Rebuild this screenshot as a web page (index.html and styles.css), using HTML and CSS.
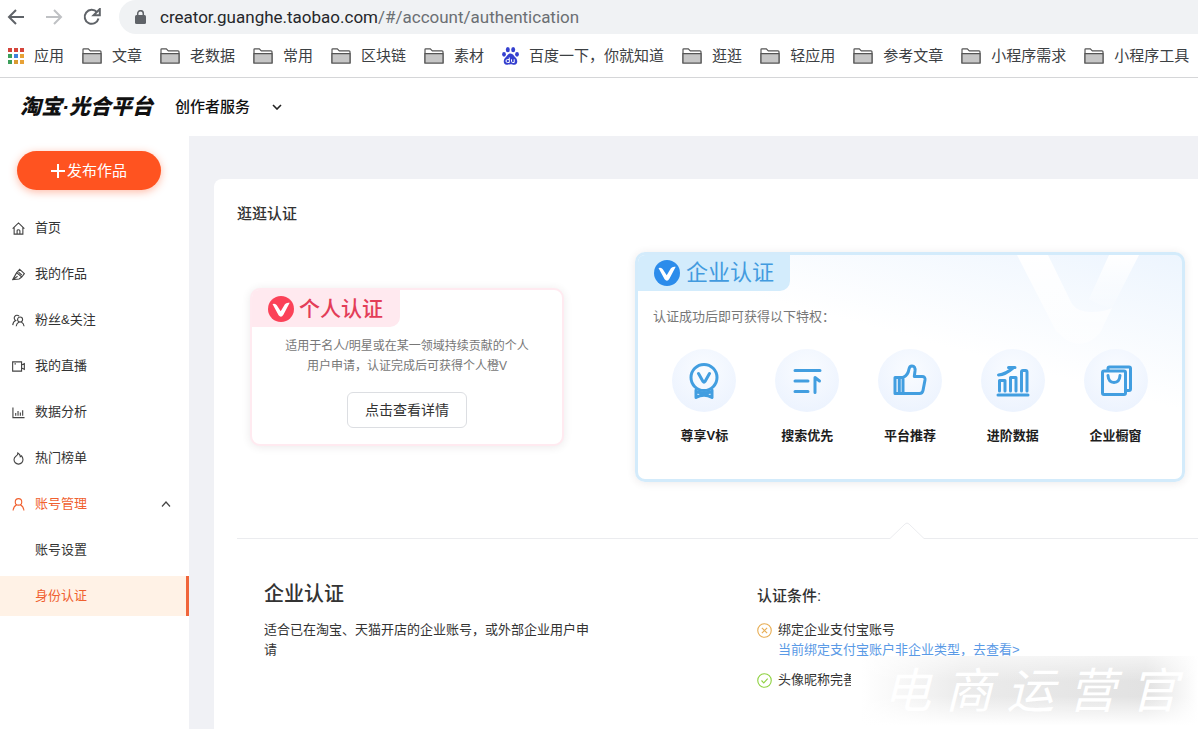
FILE: index.html
```html
<!DOCTYPE html>
<html lang="zh-CN">
<head>
<meta charset="utf-8">
<meta name="viewport" content="width=device-width, initial-scale=1">
<title>淘宝·光合平台</title>
<link rel="stylesheet" href="styles.css">
</head>
<body>
<svg class="defs" aria-hidden="true">
  <symbol id="folder" viewBox="0 0 20 16"><path d="M1 15V1.500q0-.7.7-.7h4.600l2 2H18q1 0 1 1V15Z" fill="#fff" stroke="#555" stroke-width="1.200"/><path d="M1 5.600h18V15H1Z" fill="#c6c6c6" stroke="#555" stroke-width="1.200"/></symbol>
  <symbol id="vmark" viewBox="0 0 26 26"><circle cx="13" cy="13" r="13" fill="currentColor"/><path d="M4.500 8q3-1 4.300 1.200l3.900 6 4.200-6.900q1.500-2.200 4.800-1.500l-6.300 11.900q-2.200 3.700-4.800.6Z" fill="#fff"/></symbol>
</svg>

<div class="browser">
  <div class="toolbar">
    <button class="nav" aria-label="后退"><svg width="18" height="16" viewBox="0 0 18 16"><path d="M17 8H2M9 1 2 8l7 7" /></svg></button>
    <button class="nav nav-off" aria-label="前进" disabled><svg width="18" height="16" viewBox="0 0 18 16"><path d="M1 8h15M9 1l7 7-7 7"/></svg></button>
    <button class="nav" aria-label="刷新"><svg width="18" height="18" viewBox="0 0 18 18"><path d="M15.500 10.500A7 7 0 1 1 14 4.200"/><path d="M16.800 1v6.200h-6.200Z" fill="#5f6368" stroke="none"/></svg></button>
    <div class="address">
      <svg width="11" height="14" viewBox="0 0 11 14"><path d="M1.500 5H9.500Q11 5 11 6.500V12.500Q11 14 9.500 14H1.500Q0 14 0 12.500V6.500Q0 5 1.500 5Z" fill="#5f6368"/><path d="M2.700 6V3.500a2.800 2.800 0 0 1 5.600 0V6" fill="none" stroke="#5f6368" stroke-width="1.500"/></svg>
      <span class="url">creator.guanghe.taobao.com<span class="path">/#/account/authentication</span></span>
    </div>
  </div>
  <nav class="bookmarks" aria-label="书签">
    <a href="#"><svg width="16" height="16" viewBox="0 0 16 16"><g fill="#d5453b"><path d="M0 0h4v4H0zM6 0h4v4H6zM12 0h4v4h-4z"/></g><path d="M0 6h4v4H0zM0 12h4v4H0z" fill="#3c9f5b"/><path d="M6 6h4v4H6z" fill="#3f82dc"/><path d="M6 12h4v4H6z" fill="#d99a32"/><path d="M12 6h4v4h-4zM12 12h4v4h-4z" fill="#e7a136"/></svg><span>应用</span></a>
    <a href="#"><svg class="folder"><use href="#folder"/></svg><span>文章</span></a>
    <a href="#"><svg class="folder"><use href="#folder"/></svg><span>老数据</span></a>
    <a href="#"><svg class="folder"><use href="#folder"/></svg><span>常用</span></a>
    <a href="#"><svg class="folder"><use href="#folder"/></svg><span>区块链</span></a>
    <a href="#"><svg class="folder"><use href="#folder"/></svg><span>素材</span></a>
    <a href="#"><svg width="17" height="18" viewBox="0 0 17 18" fill="#3540cf"><ellipse cx="5.800" cy="2.700" rx="2" ry="2.600"/><ellipse cx="11.200" cy="2.700" rx="2" ry="2.600"/><ellipse cx="2" cy="7.300" rx="1.900" ry="2.400"/><ellipse cx="15" cy="7.300" rx="1.900" ry="2.400"/><path d="M8.500 6.500c2.500 0 3.200 2.300 5 4 2.500 2.300 2.500 7.200-1.200 7.200-1.500 0-2.300-.5-3.800-.5s-2.300.5-3.800.5c-3.700 0-3.700-4.900-1.200-7.200 1.800-1.700 2.500-4 5-4Z"/><path d="M7.300 10.500v5H5.500a1.500 1.500 0 0 1 0-3h1.800M9.500 12.300v2q0 1.200 1.200 1.200h1.500v-3.200" fill="none" stroke="#fff" stroke-width="1"/></svg><span>百度一下，你就知道</span></a>
    <a href="#"><svg class="folder"><use href="#folder"/></svg><span>逛逛</span></a>
    <a href="#"><svg class="folder"><use href="#folder"/></svg><span>轻应用</span></a>
    <a href="#"><svg class="folder"><use href="#folder"/></svg><span>参考文章</span></a>
    <a href="#"><svg class="folder"><use href="#folder"/></svg><span>小程序需求</span></a>
    <a href="#"><svg class="folder"><use href="#folder"/></svg><span>小程序工具</span></a>
  </nav>
</div>

<header class="header">
  <a class="logo" href="#">淘宝·光合平台</a>
  <button class="switch">创作者服务<svg width="10" height="6" viewBox="0 0 10 6"><path d="m1 1 4 4 4-4" fill="none" stroke="#222" stroke-width="1.600"/></svg></button>
</header>

<div class="layout">
  <aside class="sidebar">
    <button class="publish"><svg width="14" height="14" viewBox="0 0 14 14"><path d="M7 0v14M0 7h14" stroke="#fff" stroke-width="2"/></svg>发布作品</button>
    <nav class="menu">
      <a href="#"><svg viewBox="0 0 14 14"><path d="M.7 7.200 7 1l6.300 6.200M2.300 6v7h9.400V6M5.500 13V9.500q0-1.200 1.500-1.200t1.500 1.200V13"/></svg><span>首页</span></a>
      <a href="#"><svg viewBox="0 0 14 14"><path d="M8.300 1.500 13.300 6l-2.800 3.700L5 5ZM5 5 .8 12.500l6.900-.7 2.800-2.100M.8 12.500 6 8.800M7 4.500l3.500 3"/></svg><span>我的作品</span></a>
      <a href="#"><svg viewBox="0 0 14 14"><path d="M.8 12q.2-3.600 3.200-5A3 3 0 1 1 7.600 2.300"/><circle cx="8.700" cy="6" r="2.700"/><path d="M4.500 13.200Q4.800 10 7.500 8.500M10 8.500q2.700 1.500 3 4.700"/></svg><span>粉丝&amp;关注</span></a>
      <a href="#"><svg viewBox="0 0 14 14"><path d="M.7 2h9.600v10H.7ZM10.300 5.300 13.300 4v6l-3-1.300M2.700 4.200h1.500"/></svg><span>我的直播</span></a>
      <a href="#"><svg viewBox="0 0 14 14"><path d="M1 1.500v11h12.500M4 10.500V7.500M6.500 10.500V5.500M9 10.500V7M11.500 10.500V4.500"/></svg><span>数据分析</span></a>
      <a href="#"><svg viewBox="0 0 14 14"><path d="M6.300 1q2.600 1.400 2.700 4l1.300-.9q1.500 1.900 1.500 4A4.700 4.700 0 0 1 7 13a4.700 4.700 0 0 1-4.800-4.900q0-2.200 2-3.600Q6.300 3.400 6.300 1Z"/></svg><span>热门榜单</span></a>
      <a href="#" class="open"><svg viewBox="0 0 14 14"><circle cx="7" cy="4.200" r="3.500"/><path d="M1.200 13.500q.3-4.500 3.800-6.300M9 7.200q3.500 1.800 3.800 6.300"/></svg><span>账号管理</span><svg class="caret" viewBox="0 0 10 6"><path d="m1 5.500 4-4.500 4 4.500"/></svg></a>
      <a href="#" class="sub">账号设置</a>
      <a href="#" class="sub current">身份认证</a>
    </nav>
  </aside>

  <main class="main">
    <section class="panel">
      <h1 class="panel-title">逛逛认证</h1>
      <div class="cards">
        <article class="card personal">
          <h2 class="tag"><svg><use href="#vmark"/></svg>个人认证</h2>
          <p class="intro">适用于名人/明星或在某一领域持续贡献的个人<br>用户申请，认证完成后可获得个人橙V</p>
          <button class="detail">点击查看详情</button>
        </article>
        <article class="card company">
          <svg class="backdrop" viewBox="0 0 200 100" aria-hidden="true">
            <defs>
              <linearGradient id="arm" x1="0" y1="0" x2="0" y2="1"><stop offset="0" stop-color="#fff"/><stop offset="1" stop-color="#fff" stop-opacity=".5"/></linearGradient>
              <linearGradient id="fade" x1="0" y1="0" x2="0" y2="1"><stop offset="0" stop-color="#fff"/><stop offset="1" stop-color="#fff" stop-opacity=".1"/></linearGradient>
            </defs>
            <path d="M35 0H66L90 49Q96 57 109 57 122 57 130 53L118 78Q102 96 83 84L74 76Z" fill="url(#arm)"/>
            <path d="M127 0H157L130 53Q120 52 107 44Z" fill="url(#fade)"/>
          </svg>
          <h2 class="tag"><svg><use href="#vmark"/></svg>企业认证</h2>
          <p class="intro">认证成功后即可获得以下特权：</p>
          <ul class="perks">
            <li><span class="disc"><svg viewBox="0 0 36 36"><circle cx="18" cy="14.500" r="13"/><path d="m12.500 10.500 4.500 8q1 1.500 2 0l4.500-8M10 27v7.500q8-4.500 16 0V27M10 28.500q8 3 16 0"/></svg></span>尊享V标</li>
            <li><span class="disc"><svg viewBox="0 0 36 36"><path d="M6 7.500h25M6 18h13M6 28.500h13M26 29.500V14.500l4.500 3.500"/></svg></span>搜索优先</li>
            <li><span class="disc"><svg viewBox="0 0 36 36"><path d="M3 14.500h8v16H3Zm8 0q5-2 6-8.500.5-3 3-3 3.500 0 3 5l-.7 5.500H30q3.500 0 3 3.500l-2 10.500q-.6 3-3.500 3H11M7.300 15v15"/></svg></span>平台推荐</li>
            <li><span class="disc"><svg viewBox="0 0 36 36"><path d="M3 32h30M4.500 28V17.500h5.500V28M15.500 28V14.500H21V28M26.500 28V9q0-1.500 1.500-1.500h2.500Q32 7.500 32 9v19M3.500 12q7-.5 14.500-7M13.500 4.500H20"/></svg></span>进阶数据</li>
            <li><span class="disc"><svg viewBox="0 0 36 36"><path d="M6 8h20q1.500 0 1.500 1.500v20.500q0 1.500-1.500 1.500H6q-1.500 0-1.500-1.500V9.500Q4.500 8 6 8ZM10 8V5.500Q10 4 11.500 4H31q1.500 0 1.500 1.500V26q0 1.500-1.500 1.500h-3M10 12.500q.5 7 6 7t6-7"/></svg></span>企业橱窗</li>
          </ul>
        </article>
      </div>

      <div class="divider" aria-hidden="true"><i></i><svg width="40" height="17" viewBox="0 0 40 17"><path d="M0 16.500h3L18 2q2-2 4 0l15 14.500h3" fill="none" stroke="#ebecef"/></svg><i></i></div>

      <div class="details">
        <div class="about">
          <h2>企业认证</h2>
          <p>适合已在淘宝、天猫开店的企业账号，或外部企业用户申请</p>
        </div>
        <div class="terms">
          <h3>认证条件:</h3>
          <ul>
            <li><svg class="bad" viewBox="0 0 16 16"><circle cx="8" cy="8" r="7.200"/><path d="m5.200 5.200 5.600 5.600m0-5.600-5.600 5.600"/></svg><div>绑定企业支付宝账号<br><a href="#">当前绑定支付宝账户非企业类型，去查看&gt;</a></div></li>
            <li><svg class="good" viewBox="0 0 16 16"><circle cx="8" cy="8" r="7.200"/><path d="m4.800 8 2.400 2.500 4.200-4.600"/></svg><div>头像昵称完善</div></li>
          </ul>
        </div>
      </div>
    </section>
    <div class="watermark"><span>电</span><span>商</span><span>运</span><span>营</span><span>官</span></div>
  </main>
</div>
</body>
</html>
```

FILE: styles.css
```css
* { box-sizing: border-box; }

body {
  display: flex;
  flex-direction: column;
  height: 100vh;
  margin: 0;
  overflow: hidden;
  background: #fff;
  color: #333;
  font: 13px/20px "Liberation Sans", "Noto Sans CJK SC", sans-serif;
}

h1, h2, h3, p, ul { margin: 0; padding: 0; font-weight: 400; }
ul { list-style: none; }
a { color: inherit; text-decoration: none; }
button { padding: 0; border: 0; background: none; color: inherit; font: inherit; cursor: pointer; }
svg { flex: none; }
.defs { position: absolute; width: 0; height: 0; }

/* Browser bars */
.browser { flex: none; border-bottom: 1px solid #d5d6d8; }
.toolbar { display: flex; align-items: center; height: 34px; padding-left: 7px; }
.nav { display: flex; align-items: center; width: 18px; height: 18px; margin-right: 20px; }
.nav path { fill: none; stroke: #5f6368; stroke-width: 2; }
.nav-off path { stroke: #bfc1c4; }
.address {
  display: flex;
  flex: 1;
  align-items: center;
  gap: 14px;
  height: 34px;
  margin-left: -2px;
  padding-left: 16px;
  border-radius: 17px 0 0 17px;
  background: #f0f2f4;
}
.url { color: #25272a; font: 17px/24px Roboto, sans-serif; white-space: nowrap; }
.path { color: #6b6f73; }
.bookmarks {
  display: flex;
  align-items: center;
  gap: 18px;
  height: 43px;
  padding-left: 8px;
  color: #3c4043;
  font-size: 15px;
  white-space: nowrap;
}
.bookmarks a { display: flex; flex: none; align-items: center; gap: 10px; }
.folder { width: 20px; height: 16px; }

/* Site header */
.header { display: flex; flex: none; align-items: center; height: 58px; padding-left: 20px; color: #111; }
.logo { font-size: 21px; font-style: italic; font-weight: 900; line-height: 30px; }
.switch { display: flex; align-items: center; gap: 22px; margin-left: 22px; font-size: 15px; font-weight: 500; }

.layout { display: flex; flex: 1; min-height: 0; }

/* Sidebar */
.sidebar { flex: none; width: 189px; padding-top: 15px; }
.publish {
  display: flex;
  align-items: center;
  justify-content: center;
  gap: 2px;
  width: 144px;
  height: 39px;
  margin-left: 17px;
  border-radius: 20px;
  background: #ff5320;
  box-shadow: 0 2px 8px rgba(255, 83, 32, .4);
  color: #fff;
  font-size: 15px;
}
.menu { display: flex; flex-direction: column; gap: 6px; margin-top: 18px; }
.menu a { display: flex; align-items: center; gap: 10px; height: 40px; padding: 0 18px 0 12px; }
.menu svg { width: 13px; height: 13px; fill: none; stroke: #444; stroke-width: 1.2; }
.menu .open { color: #f0602f; }
.menu .open svg { stroke: #f0602f; }
.menu .open .caret { width: 10px; height: 6px; margin-left: auto; stroke: #444; }
.menu .sub { padding-left: 35px; }
.menu .current { border-right: 3px solid #f0653a; background: #fff2e6; color: #f0602f; }

/* Content */
.main { position: relative; flex: 1; min-width: 0; padding: 43px 0 0 25px; background: #f0f1f5; }
.panel { height: 100%; padding: 24px 0 0 23px; border-radius: 8px 0 0 0; background: #fff; }
.panel-title { font-size: 15px; font-weight: 500; line-height: 22px; }

.cards { display: flex; align-items: center; gap: 71px; margin-top: 27px; padding: 0 13px; }
.card { position: relative; border-radius: 10px; background: #fff; box-shadow: 0 1px 8px rgba(60, 40, 50, .1); }
.tag { display: flex; align-items: center; width: fit-content; border-radius: 7px 0 10px 0; }
.tag svg { width: 26px; height: 26px; }

.personal { flex: none; width: 314px; border: 2px solid #ffeaf0; text-align: center; }
.personal .tag { gap: 5px; height: 37px; padding: 0 17px 0 16px; background: #ffe9ef; color: #e33d58; font-size: 21px; font-weight: 500; }
.personal .tag svg { color: #fb4258; }
.personal .intro { margin-top: 9px; color: #777; font-size: 12px; }
.detail { width: 120px; height: 36px; margin: 16px 0; border: 1px solid #dcdee2; border-radius: 6px; font-size: 14px; }

.company { flex: 1; border: 3px solid #d3ebfb; background: linear-gradient(195deg, #edf5fe 0, #fff 42%); }
.backdrop { position: absolute; top: 0; right: 0; width: 200px; height: 100px; }
.company .tag { position: relative; gap: 6px; height: 36px; padding: 0 16px; background: #d3ecfc; color: #429bdf; font-size: 22px; }
.company .tag svg { color: #2c8ceb; }
.company .intro { margin: 16px 15px 22px; color: #777; }
.perks { display: grid; grid-template-columns: repeat(5, 1fr); padding: 0 15px 33px; color: #1d1d1d; font-weight: 700; text-align: center; }
.perks li { display: flex; position: relative; flex-direction: column; align-items: center; gap: 14px; }
.disc {
  display: grid;
  place-items: center;
  width: 64px;
  height: 63px;
  border-radius: 50%;
  background: radial-gradient(circle at 50% 35%, #fafcff, #e9f1fe);
}
.disc svg { width: 36px; height: 36px; fill: none; stroke: #429ee0; stroke-width: 3; stroke-linecap: round; stroke-linejoin: round; }

.divider { display: flex; margin-top: 40px; }
.divider i { flex: 271; border-bottom: 1px solid #ebecef; }
.divider i:first-child { flex: 650; }

.details { display: grid; grid-template-columns: 493fr 441fr; margin-top: 41px; padding-left: 27px; }
.about h2 { font-size: 20px; font-weight: 500; line-height: 28px; }
.about p { max-width: 336px; margin-top: 12px; }
.terms { padding-top: 6px; }
.terms h3 { font-size: 15px; font-weight: 500; }
.terms ul { display: flex; flex-direction: column; gap: 10px; margin-top: 14px; }
.terms li { display: flex; gap: 6px; }
.terms svg { width: 15px; height: 15px; margin-top: 3px; fill: none; stroke-width: 1.2; }
.terms a { color: #5a9ae6; }
.bad { stroke: #e8ae55; }
.good { stroke: #90d243; }

.watermark {
  display: flex;
  position: absolute;
  right: 0;
  bottom: 0;
  justify-content: space-between;
  width: 347px;
  height: 73px;
  padding: 0 20px 0 32px;
  background:
    linear-gradient(#fff9, #fff0 35%, #fff0 55%, #fff 95%),
    linear-gradient(90deg, #fff 3%, #ebebeb 32%, #e2e2e2 85%, #fff);
  color: #fff;
  font-size: 48px;
  font-style: italic;
  line-height: 72px;
}
```
